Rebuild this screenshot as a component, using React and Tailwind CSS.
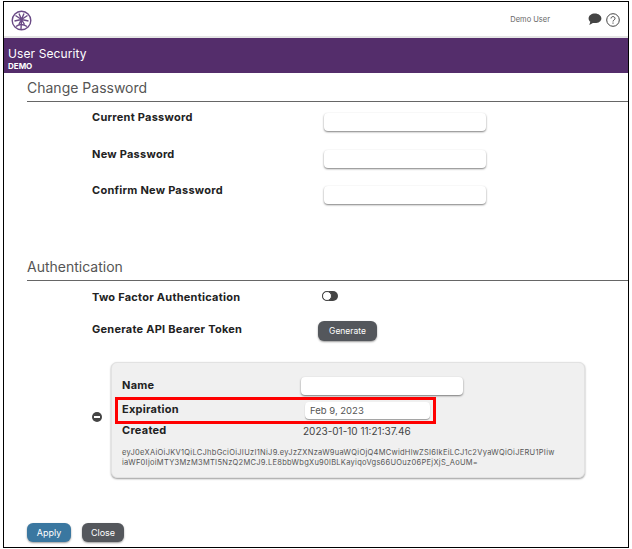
import React from 'react';

const font = "font-['Inter','Liberation_Sans',sans-serif]";
const label = 'text-[11px] leading-[14px] font-bold text-[#222] tracking-[0.25px]';

const Logo = () => (
    <svg width="21" height="21" viewBox="0 0 21 21" fill="none" stroke="#6a4a86" strokeWidth="1.400">
        <circle cx="10.500" cy="10.500" r="9.300" />
        <path d="M10.500 9.500 L4.500 5.500 M10.500 9.500 L16.500 5.500 M10.500 9.500 L3.500 11 M10.500 9.500 L17.500 11 M10.500 9.500 L8 3.500 M10.500 9.500 L13 3.500" />
        <path d="M10.500 9.500 L8 14 M10.500 9.500 L13.500 14.500 M10.500 9.500 L10 19" />
        <path d="M5 16.500 Q10 12.500 16 16.500" />
    </svg>
);

const Field = ({ className = '' }) => (
    <input className={`h-[18px] bg-white rounded-sm shadow-[0_1px_2px_rgba(0,0,0,0.5)] outline-none ${className}`} readOnly />
);

const PasswordRow = ({ text, className = '' }) => (
    <div className={`flex items-start ${className}`}>
        <div className={`w-[232px] ${label}`}>{text}</div>
        <Field className="w-[162px] mt-[3px]" />
    </div>
);

const SectionTitle = ({ children, className = '' }) => (
    <div className={`ml-[23px] border-b border-[#666] text-[14px] leading-[18px] text-[#555] pb-[4px] ${className}`}>{children}</div>
);

const App = () => {
    return (
        <div className="w-[632px] h-[549px] bg-white pt-[1px] pl-[3px]">
            <div className={`w-[626px] h-[547px] border border-black flex flex-col ${font}`}>
                <header className="h-[36px] flex items-center border-b-2 border-[#e4e4e4] shrink-0">
                    <div className="ml-[7px] mt-[2px]"><Logo /></div>
                    <div className="ml-auto mt-[1px] text-[7.500px] text-[#666]">Demo User</div>
                    <svg className="ml-[38px] mt-[1px]" width="14" height="13" viewBox="0 0 14 13" fill="#444">
                        <path d="M7 .5C3.400.5.600 2.600.600 5.400c0 1.300.7 2.500 1.700 3.300L1.300 12l3.600-2.100c.7.1 1.400.2 2.100.2 3.500 0 6.400-2.100 6.400-4.700S10.500.5 7 .5z" />
                    </svg>
                    <svg className="ml-[4px] mr-[8px] mt-[1px]" width="14" height="14" viewBox="0 0 14 14" fill="none" stroke="#444" strokeWidth="1">
                        <circle cx="7" cy="7" r="6.300" />
                        <path d="M5 5.500c0-1.100.9-1.900 2-1.900s2 .8 2 1.900c0 1.500-2 1.500-2 3" />
                        <path d="M7 9.500v1.200" />
                    </svg>
                </header>

                <div className="h-[35px] shrink-0 bg-[#542d6b] pl-[4px] pt-[9px] text-white">
                    <div className="text-[12px] leading-[14px] tracking-[0.1px]">User Security</div>
                    <div className="text-[8px] leading-[10px] font-bold">DEMO</div>
                </div>

                <main className="flex-1 flex flex-col">
                    <SectionTitle className="mt-[6px]">Change Password</SectionTitle>
                    <div className="ml-[88px] mt-[8px]">
                        <PasswordRow text="Current Password" />
                        <PasswordRow text="New Password" className="mt-[16px]" />
                        <PasswordRow text="Confirm New Password" className="mt-[15px]" />
                    </div>

                    <SectionTitle className="mt-[54px]">Authentication</SectionTitle>
                    <div className="ml-[88px] mt-[9px] flex items-center h-[14px]">
                        <div className={`w-[230px] ${label}`}>Two Factor Authentication</div>
                        <div className="w-[16px] h-[10px] rounded-full bg-[#444] relative -mt-[2px]">
                            <div className="absolute left-0 top-0 w-[10px] h-[10px] rounded-full bg-white border border-[#444]"></div>
                        </div>
                    </div>
                    <div className="ml-[88px] mt-[17px] flex items-start h-[20px]">
                        <div className={`w-[226px] mt-[1px] ${label}`}>Generate API Bearer Token</div>
                        <button className="w-[59px] h-[20px] rounded-md bg-[#54575c] text-white text-[8.500px] shadow-[0_1px_2px_rgba(0,0,0,0.4)]">Generate</button>
                    </div>

                    <div className="flex items-center mt-[21px] ml-[88px]">
                        <div className="w-[10px] h-[10px] -mt-[7px] rounded-full bg-[#444] flex items-center justify-center mr-[9px]">
                            <div className="w-[6px] h-[2px] bg-white"></div>
                        </div>
                        <div className="w-[474px] h-[116px] bg-[#f0f0f0] rounded-md border border-[#e2e2e2] shadow-[0_1px_2px_rgba(0,0,0,0.4)] pt-[14px]">
                            <div className="flex items-center h-[18px] pl-[10px]">
                                <div className={`w-[179px] -mt-[2px] ${label}`}>Name</div>
                                <Field className="w-[162px]" />
                            </div>
                            <div className="mt-[2px] ml-[3px] w-[321px] h-[27px] border-[3px] border-[#ff0000] flex items-center pl-[4px]">
                                <div className={`w-[183px] -mt-[4px] ${label}`}>Expiration</div>
                                <div className="w-[125px] h-[17px] bg-white rounded-sm shadow-[0_1px_1px_rgba(0,0,0,0.35)] pl-[5px] text-[9.500px] leading-[17px] text-[#555]">Feb 9, 2023</div>
                            </div>
                            <div className="flex items-center h-[14px] pl-[10px]">
                                <div className={`w-[181px] -mt-[2px] ${label}`}>Created</div>
                                <div className="text-[10px] text-[#444]">2023-01-10 11:21:37.46</div>
                            </div>
                            <div className="mt-[10px] pl-[10px] text-[7.500px] leading-[10px] text-[#555] whitespace-nowrap tracking-[0.28px]">
                                eyJ0eXAiOiJKV1QiLCJhbGciOiJIUzI1NiJ9.eyJzZXNzaW9uaWQiOjQ4MCwidHlwZSI6IkEiLCJ1c2VyaWQiOiJERU1PIiw<br />
                                iaWF0IjoiMTY3MzM3MTI5NzQ2MCJ9.LE8bbWbgXu90lBLKayiqoVgs66UOuz06PEjXjS_AoUM=
                            </div>
                        </div>
                    </div>

                    <div className="mt-auto mb-[5px] ml-[23px] flex gap-[11px]">
                        <button className="w-[44px] h-[19px] rounded-md bg-[#3a77a0] text-white text-[9px] shadow-[0_1px_2px_rgba(0,0,0,0.4)]">Apply</button>
                        <button className="w-[42px] h-[19px] rounded-md bg-[#54575c] text-white text-[9px] shadow-[0_1px_2px_rgba(0,0,0,0.4)]">Close</button>
                    </div>
                </main>
            </div>
        </div>
    );
};

export default App;
